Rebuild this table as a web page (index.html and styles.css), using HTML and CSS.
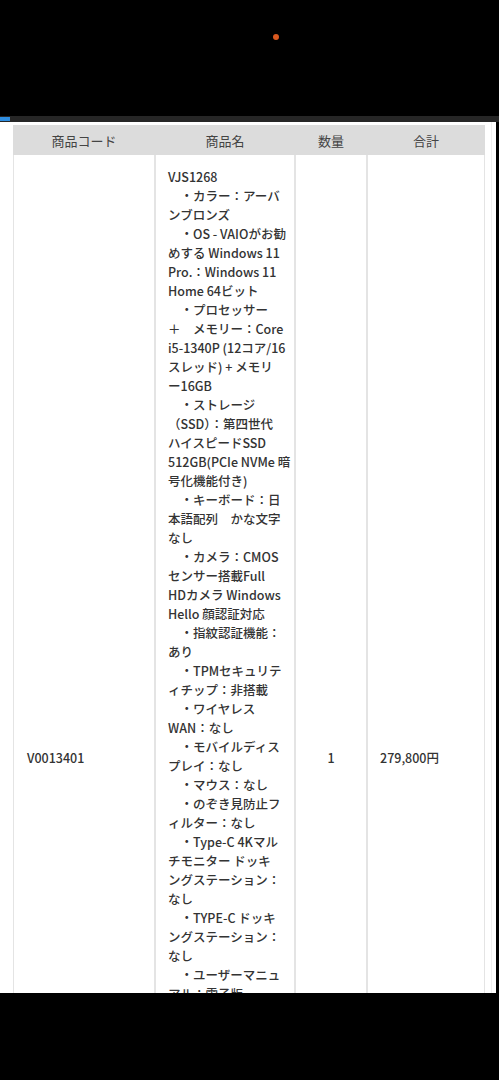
FILE: index.html
```html
<!DOCTYPE html>
<html lang="ja">
<head>
<meta charset="utf-8">
<title>注文内容</title>
<link rel="stylesheet" href="styles.css">
</head>
<body>
<div class="screen">
  <div class="status"><span class="dot"></span></div>
  <div class="tabbar"><span class="progress"></span></div>
  <div class="viewport">
    <div class="page">
      <table class="orders">
        <thead>
          <tr>
            <th class="c-code">商品コード</th>
            <th class="c-name">商品名</th>
            <th class="c-qty">数量</th>
            <th class="c-sum">合計</th>
          </tr>
        </thead>
        <tbody>
          <tr>
            <td class="c-code">V0013401</td>
            <td class="c-name">VJS1268<br>　・カラー：アーバ<br>ンブロンズ<br>　・OS - VAIOがお勧<br>めする Windows 11<br>Pro.：Windows 11<br>Home 64ビット<br>　・プロセッサー<br>＋　メモリー：Core<br>i5-1340P (12コア/16<br>スレッド) + メモリ<br>ー16GB<br>　・ストレージ<br>（SSD）：第四世代<br>ハイスピードSSD<br>512GB(PCIe NVMe 暗<br>号化機能付き)<br>　・キーボード：日<br>本語配列　かな文字<br>なし<br>　・カメラ：CMOS<br>センサー搭載Full<br>HDカメラ Windows<br>Hello 顔認証対応<br>　・指紋認証機能：<br>あり<br>　・TPMセキュリテ<br>ィチップ：非搭載<br>　・ワイヤレス<br>WAN：なし<br>　・モバイルディス<br>プレイ：なし<br>　・マウス：なし<br>　・のぞき見防止フ<br>ィルター：なし<br>　・Type-C 4Kマル<br>チモニター ドッキ<br>ングステーション：<br>なし<br>　・TYPE-C ドッキ<br>ングステーション：<br>なし<br>　・ユーザーマニュ<br>アル：電子版</td>
            <td class="c-qty">1</td>
            <td class="c-sum">279,800円</td>
          </tr>
        </tbody>
      </table>
    </div>
  </div>
  <div class="bottom"></div>
</div>
</body>
</html>
```

FILE: styles.css
```css
* { box-sizing: border-box; }

html, body {
  margin: 0;
  padding: 0;
  background: #000;
}

.screen {
  width: 499px;
  height: 1080px;
  display: flex;
  flex-direction: column;
  background: #000;
  font-family: "Noto Sans CJK JP", "Noto Sans", sans-serif;
}

.status {
  height: 116px;
  padding: 34px 0 0 273px;
  flex: none;
}

.dot {
  display: block;
  width: 6px;
  height: 6px;
  border-radius: 50%;
  background: #d9581f;
}

.tabbar {
  height: 6px;
  flex: none;
  background: #262626;
  padding-top: 1px;
}

.progress {
  display: block;
  width: 10px;
  height: 4px;
  background: #2f8ee0;
}

.viewport {
  width: 496px;
  height: 871px;
  flex: none;
  overflow: hidden;
  background: #fff;
}

.page {
  width: 492px;
  height: 100%;
  border-right: 1px solid #efefef;
  padding: 3px 0 0 13px;
}

.orders {
  width: 472px;
  table-layout: fixed;
  border-collapse: separate;
  border-spacing: 0;
  color: #333;
}

.orders th {
  height: 30px;
  background: #dcdcdc;
  font-weight: normal;
  font-size: 13px;
  color: #444;
  text-align: center;
  padding: 0;
}

.orders th.c-code { width: 142px; }
.orders th.c-name { width: 140px; }
.orders th.c-qty { width: 72px; }
.orders th.c-sum { width: 118px; }

.orders td {
  border: 1px solid #e4e4e4;
  border-top: none;
  font-size: 12.5px;
  font-weight: 500;
  line-height: 19px;
  vertical-align: middle;
  padding: 12px 12px;
  white-space: nowrap;
}

.orders td + td { border-left: 1px solid #e4e4e4; }

.orders td.c-code { padding-left: 13px; }
.orders td.c-name {
  padding-left: 12px;
  vertical-align: top;
  padding-bottom: 356px;
}
.orders td.c-qty { text-align: center; }
.orders td.c-sum { padding-left: 12px; }

.bottom {
  flex: 1;
  background: #000;
}
```
